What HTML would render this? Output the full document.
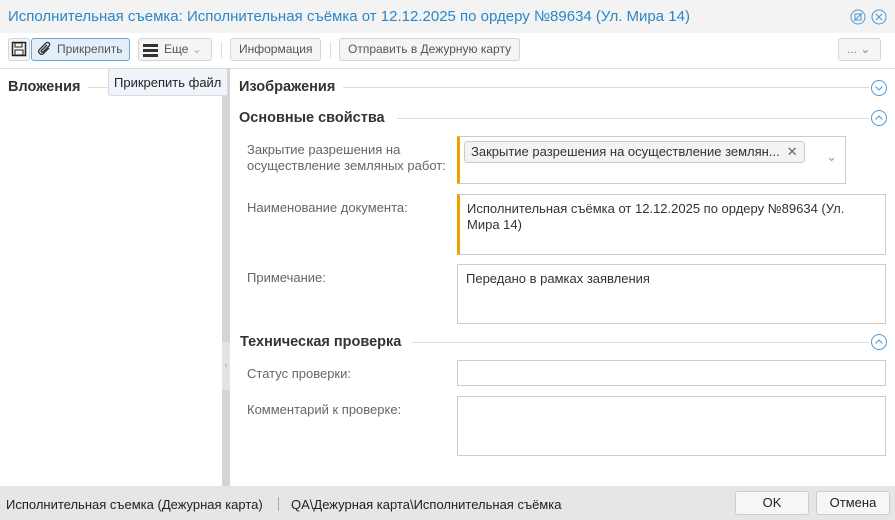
<!DOCTYPE html><html><head><meta charset="utf-8"><style>
*{box-sizing:border-box;margin:0;padding:0}
body{width:895px;height:520px;overflow:hidden;font-family:"Liberation Sans",sans-serif;background:#fff;position:relative;color:#333}
.a{position:absolute}
.title{left:0;top:0;width:895px;height:33px;background:#f3f3f3}
.title span{position:absolute;left:8px;top:8px;font-size:15px;color:#2a87c8}
.btn{position:absolute;top:38px;height:23px;border:1px solid #d4d4d4;border-radius:3px;background:#f5f5f5;font-size:12px;color:#555;line-height:21px;padding:0 8px;white-space:nowrap}
.lbl{position:absolute;font-size:13px;color:#666;left:247px;line-height:16px}
.fld{position:absolute;border:1px solid #ccc;background:#fff;font-size:13px;color:#333;padding:6px 8px;line-height:16px}
.sec{position:absolute;font-size:14.5px;font-weight:bold;color:#333}
.line{position:absolute;height:1px;background:#ddd}
</style></head><body>
<div class="a title"><span>Исполнительная съемка: Исполнительная съёмка от 12.12.2025 по ордеру №89634 (Ул. Мира 14)</span>
<svg class="a" style="left:850px;top:9px" width="16" height="16"><circle cx="8" cy="8" r="7" fill="none" stroke="#4a9ad6"/><rect x="5" y="5" width="6" height="6" fill="none" stroke="#4a9ad6"/><line x1="4" y1="12" x2="12" y2="4" stroke="#4a9ad6"/></svg>
<svg class="a" style="left:871px;top:9px" width="16" height="16"><circle cx="8" cy="8" r="7" fill="none" stroke="#4a9ad6"/><path d="M5 5L11 11M11 5L5 11" stroke="#4a9ad6"/></svg>
</div>
<div class="btn" style="left:8px;width:22px;padding:0"><svg style="position:absolute;left:2px;top:2px" width="16" height="16"><rect x="1.5" y="1.5" width="13" height="13" fill="none" stroke="#222" stroke-width="1.5"/><rect x="4" y="2" width="7" height="4" fill="none" stroke="#222"/><rect x="4" y="9" width="8" height="5" fill="none" stroke="#222"/></svg></div>
<div class="btn" style="left:31px;width:99px;background:#e3eef8;border-color:#6aa5d8;padding-left:25px">Прикрепить<svg style="position:absolute;left:4px;top:2px" width="16" height="16"><path d="M13 7L7 13a3 3 0 0 1-4-4l7-7a2 2 0 0 1 3 3L7 11a1 1 0 0 1-1.5-1.5L11 4" fill="none" stroke="#333" stroke-width="1.3"/></svg></div>
<div class="btn" style="left:138px;width:74px;padding-left:25px">Еще <span style="color:#aaa">⌄</span><div class="a" style="left:4px;top:5px;width:15px;height:3px;background:#333;box-shadow:0 5px 0 #333,0 10px 0 #333"></div></div>
<div class="a" style="left:221px;top:42px;width:1px;height:16px;background:#ddd"></div>
<div class="btn" style="left:230px">Информация</div>
<div class="a" style="left:330px;top:42px;width:1px;height:16px;background:#ddd"></div>
<div class="btn" style="left:339px">Отправить в Дежурную карту</div>
<div class="btn" style="left:838px;width:43px;color:#888">... ⌄</div>
<div class="line" style="left:0;top:68px;width:895px;background:#e0e0e0"></div>
<div class="sec" style="left:8px;top:79px">Вложения</div>
<div class="line" style="left:88px;top:87px;width:20px"></div>
<div class="a" style="left:222px;top:68px;width:8px;height:418px;background:#d4d4d4"></div>
<div class="a" style="left:222px;top:342px;width:8px;height:48px;background:#e4e4e4;color:#aaa;font-size:10px;line-height:48px;text-align:center">‹</div>
<div class="a" style="left:108px;top:68px;width:120px;height:28px;background:#eef4fa;border:1px solid #d4dde6;border-radius:3px;font-size:13px;color:#222;padding:6px 5px;white-space:nowrap">Прикрепить файл</div>
<div class="sec" style="left:239px;top:79px">Изображения</div>
<div class="line" style="left:343px;top:87px;width:526px"></div>
<svg class="a" style="left:870px;top:79px" width="18" height="18"><circle cx="9" cy="9" r="7.5" fill="none" stroke="#4a9ad6"/><path d="M5.5 7.5L9 11L12.5 7.5" fill="none" stroke="#4a9ad6"/></svg>
<div class="sec" style="left:239px;top:110px">Основные свойства</div>
<div class="line" style="left:397px;top:118px;width:472px"></div>
<svg class="a" style="left:870px;top:109px" width="18" height="18"><circle cx="9" cy="9" r="7.5" fill="none" stroke="#4a9ad6"/><path d="M5.5 10.5L9 7L12.5 10.5" fill="none" stroke="#4a9ad6"/></svg>
<div class="lbl" style="top:142px">Закрытие разрешения на<br>осуществление земляных работ:</div>
<div class="fld" style="left:457px;top:136px;width:389px;height:48px;border-left:3px solid #f0a000;padding:4px"><div style="display:inline-block;border:1px solid #ccc;background:#f3f3f3;border-radius:3px;padding:0 24px 0 6px;height:22px;line-height:20px;position:relative;white-space:nowrap">Закрытие разрешения на осуществление землян...<span style="position:absolute;right:6px;top:0;color:#666">✕</span></div><span class="a" style="right:8px;top:12px;color:#999">⌄</span></div>
<div class="lbl" style="top:200px">Наименование документа:</div>
<div class="fld" style="left:457px;top:194px;width:429px;height:61px;border-left:3px solid #f0a000;padding-left:7px">Исполнительная съёмка от 12.12.2025 по ордеру №89634 (Ул.<br>Мира 14)</div>
<div class="lbl" style="top:270px">Примечание:</div>
<div class="fld" style="left:457px;top:264px;width:429px;height:60px">Передано в рамках заявления</div>
<div class="sec" style="left:240px;top:334px">Техническая проверка</div>
<div class="line" style="left:412px;top:342px;width:457px"></div>
<svg class="a" style="left:870px;top:333px" width="18" height="18"><circle cx="9" cy="9" r="7.5" fill="none" stroke="#4a9ad6"/><path d="M5.5 10.5L9 7L12.5 10.5" fill="none" stroke="#4a9ad6"/></svg>
<div class="lbl" style="top:366px">Статус проверки:</div>
<div class="fld" style="left:457px;top:360px;width:429px;height:26px"></div>
<div class="lbl" style="top:402px">Комментарий к проверке:</div>
<div class="fld" style="left:457px;top:396px;width:429px;height:60px"></div>
<div class="a" style="left:0;top:486px;width:895px;height:34px;background:#e6e6e6;font-size:13px;color:#222">
<span class="a" style="left:6px;top:11px">Исполнительная съемка (Дежурная карта)</span>
<div class="a" style="left:278px;top:11px;width:1px;height:14px;background:#aaa"></div>
<span class="a" style="left:291px;top:11px">QA\Дежурная карта\Исполнительная съёмка</span>
<div class="a" style="left:735px;top:5px;width:74px;height:24px;background:#f6f6f6;border:1px solid #ccc;border-radius:3px;text-align:center;line-height:22px">OK</div>
<div class="a" style="left:816px;top:5px;width:74px;height:24px;background:#f6f6f6;border:1px solid #ccc;border-radius:3px;text-align:center;line-height:22px">Отмена</div>
</div>
</body></html>
